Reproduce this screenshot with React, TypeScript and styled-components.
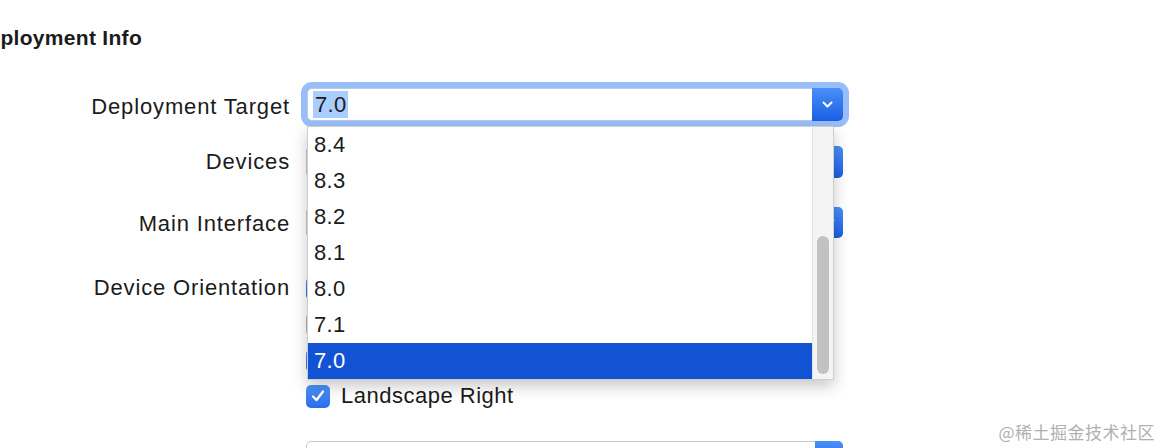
import * as React from "react";
import styled, { createGlobalStyle } from "styled-components";

const GlobalStyle = createGlobalStyle`
  html, body {
    margin: 0;
    padding: 0;
    background: #ffffff;
  }
  body {
    font-family: "Liberation Sans", Arial, Helvetica, sans-serif;
    color: #1b1b1b;
  }
`;

const Page = styled.div`
  position: relative;
  width: 1162px;
  height: 448px;
  overflow: hidden;
  background: #ffffff;
`;

const Heading = styled.h2`
  margin: 26px 0 0 -27px;
  font-size: 21px;
  line-height: 24px;
  font-weight: bold;
  letter-spacing: 0.3px;
`;

const Form = styled.div`
  display: flex;
  flex-direction: column;
`;

const Row = styled.div<{ $top: number; $height: number; $align?: string }>`
  display: flex;
  align-items: ${(p) => p.$align || "center"};
  margin-top: ${(p) => p.$top}px;
  height: ${(p) => p.$height}px;
`;

const Label = styled.div<{ $pad?: number }>`
  width: 290px;
  text-align: right;
  font-size: 22px;
  letter-spacing: 0.85px;
  line-height: 26px;
  padding-top: ${(p) => p.$pad || 0}px;
  box-sizing: border-box;
  white-space: nowrap;
`;

const Control = styled.div<{ $left: number }>`
  position: relative;
  margin-left: ${(p) => p.$left}px;
`;

const ComboField = styled.div`
  position: relative;
  display: flex;
  align-items: center;
  width: 536px;
  height: 33px;
  box-sizing: border-box;
  border: 1px solid #b9c9e6;
  border-radius: 5px;
  background: #ffffff;
  box-shadow: 0 0 0 6px #98befa;
`;

const ComboText = styled.span`
  margin-left: 5px;
  padding: 0 2px;
  font-size: 22px;
  line-height: 27px;
  background: #a9cdfc;
  letter-spacing: 0.3px;
`;

const BlueButton = styled.div<{ $width: number }>`
  margin-left: auto;
  align-self: stretch;
  width: ${(p) => p.$width}px;
  margin-top: -1px;
  margin-bottom: -1px;
  margin-right: -1px;
  border-radius: 0 5px 5px 0;
  background: linear-gradient(#4a8ff8, #1a5fe4);
  display: flex;
  align-items: center;
  justify-content: center;
`;

const PopupField = styled.div<{ $height: number }>`
  display: flex;
  width: 537px;
  height: ${(p) => p.$height}px;
  box-sizing: border-box;
  border: 1px solid #c9c9c9;
  border-radius: 5px;
  background: #ffffff;
`;

const Menu = styled.div`
  position: absolute;
  left: 0;
  top: 38px;
  width: 527px;
  height: 254px;
  box-sizing: border-box;
  display: flex;
  background: #ffffff;
  border: 1px solid #cfcfcf;
  box-shadow: 0 6px 14px rgba(0, 0, 0, 0.22);
  z-index: 5;
`;

const MenuList = styled.div`
  flex: 1;
  display: flex;
  flex-direction: column;
`;

const MenuItem = styled.div<{ $selected?: boolean }>`
  height: 36px;
  display: flex;
  align-items: center;
  padding-left: 6px;
  font-size: 22px;
  letter-spacing: 0.3px;
  color: ${(p) => (p.$selected ? "#ffffff" : "#1b1b1b")};
  background: ${(p) => (p.$selected ? "#1253d3" : "transparent")};
`;

const Track = styled.div`
  width: 21px;
  display: flex;
  justify-content: center;
  background: #f4f4f4;
  border-left: 1px solid #e2e2e2;
  box-sizing: border-box;
`;

const Thumb = styled.div`
  width: 12px;
  height: 138px;
  margin-top: 109px;
  border-radius: 6px;
  background: #c2c2c2;
`;

const CheckList = styled.div`
  display: flex;
  flex-direction: column;
`;

const CheckRow = styled.div`
  height: 36px;
  display: flex;
  align-items: center;
  gap: 11px;
  font-size: 22px;
  letter-spacing: 0.5px;
`;

const Box = styled.div<{ $checked: boolean }>`
  width: 24px;
  height: 23px;
  box-sizing: border-box;
  border-radius: 5px;
  display: flex;
  align-items: center;
  justify-content: center;
  background: ${(p) =>
    p.$checked ? "linear-gradient(#4d93f8, #2a6fe9)" : "#ffffff"};
  border: ${(p) => (p.$checked ? "none" : "1px solid #b5b5b5")};
`;

const Watermark = styled.div`
  position: absolute;
  right: 7px;
  top: 419px;
  font-family: "Noto Sans CJK SC", "Liberation Sans", sans-serif;
  font-size: 17px;
  color: #b0b0b0;
  letter-spacing: 0.5px;
`;

const Chevron = () => (
  <svg width="11" height="7" viewBox="0 0 11 7">
    <path
      d="M1.5 1.5 L5.5 5.5 L9.5 1.5"
      fill="none"
      stroke="#ffffff"
      strokeWidth="2"
      strokeLinecap="round"
      strokeLinejoin="round"
    />
  </svg>
);

const UpDown = () => (
  <svg width="10" height="16" viewBox="0 0 10 16">
    <path
      d="M1.5 6 L5 2.5 L8.5 6 M1.5 10 L5 13.5 L8.5 10"
      fill="none"
      stroke="#ffffff"
      strokeWidth="1.8"
      strokeLinecap="round"
      strokeLinejoin="round"
    />
  </svg>
);

const Tick = () => (
  <svg width="16" height="14" viewBox="0 0 16 14">
    <path
      d="M3 7.5 L6.5 11 L13 2.5"
      fill="none"
      stroke="#ffffff"
      strokeWidth="2.4"
      strokeLinecap="round"
      strokeLinejoin="round"
    />
  </svg>
);

const versions = ["8.4", "8.3", "8.2", "8.1", "8.0", "7.1", "7.0"];

// the first three rows sit under the open menu, only their boxes peek out
const orientations = [
  { name: "", checked: true },
  { name: "", checked: false },
  { name: "", checked: true },
  { name: "Landscape Right", checked: true },
];

export default function App() {
  return (
    <Page>
      <GlobalStyle />
      <Heading>Deployment Info</Heading>
      <Form>
        <Row $top={38} $height={33}>
          <Label $pad={4}>Deployment Target</Label>
          <Control $left={17}>
            <ComboField>
              <ComboText>7.0</ComboText>
              <BlueButton $width={31}>
                <Chevron />
              </BlueButton>
            </ComboField>
            <Menu>
              <MenuList>
                {versions.map((v) => (
                  <MenuItem key={v} $selected={v === "7.0"}>
                    {v}
                  </MenuItem>
                ))}
              </MenuList>
              <Track>
                <Thumb />
              </Track>
            </Menu>
          </Control>
        </Row>
        <Row $top={25} $height={32}>
          <Label>Devices</Label>
          <Control $left={16}>
            <PopupField $height={32}>
              <BlueButton $width={28}>
                <UpDown />
              </BlueButton>
            </PopupField>
          </Control>
        </Row>
        <Row $top={29} $height={31}>
          <Label $pad={3}>Main Interface</Label>
          <Control $left={16}>
            <PopupField $height={31}>
              <BlueButton $width={28}>
                <Chevron />
              </BlueButton>
            </PopupField>
          </Control>
        </Row>
        <Row $top={32} $height={144} $align="flex-start">
          <Label $pad={5}>Device Orientation</Label>
          <Control $left={16}>
            <CheckList>
              {orientations.map((o, i) => (
                <CheckRow key={i}>
                  <Box $checked={o.checked}>{o.checked && <Tick />}</Box>
                  {o.name}
                </CheckRow>
              ))}
            </CheckList>
          </Control>
        </Row>
        <Row $top={27} $height={32} $align="flex-start">
          <Label />
          <Control $left={16}>
            <PopupField $height={32}>
              <BlueButton $width={28}>
                <UpDown />
              </BlueButton>
            </PopupField>
          </Control>
        </Row>
      </Form>
      <Watermark>@稀土掘金技术社区</Watermark>
    </Page>
  );
}
